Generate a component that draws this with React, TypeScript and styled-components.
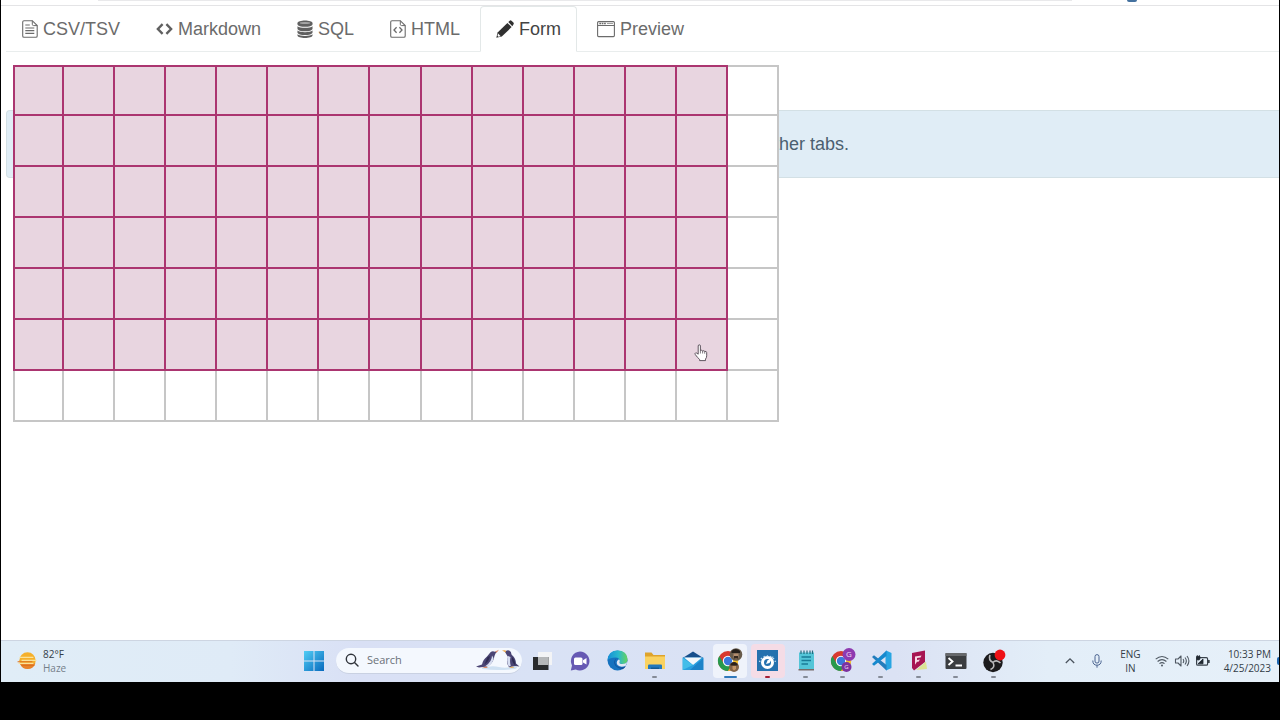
import { useState } from 'react';
import styled, { createGlobalStyle, css } from 'styled-components';

const GlobalStyle = createGlobalStyle`
	* {
		box-sizing: border-box;
	}

	body {
		margin: 0;
		background: #000000;
		font-family: 'Liberation Sans', Arial, sans-serif;
	}

	svg {
		display: block;
		flex-shrink: 0;
	}
`;

const Screen = styled.div`
	display: flex;
	flex-direction: column;
	min-height: 100vh;
	padding: 0 1px 38px;
	overflow: hidden;
`;

const BrowserEdge = styled.div`
	display: flex;
	align-items: flex-start;
	height: 6px;
	padding-left: 97px;
	background: #ffffff;
	border-bottom: 1px solid #e4e4e6;

	.address {
		flex: 0 1 974px;
		height: 1px;
		background: #e9e9eb;
	}

	.extension {
		width: 10px;
		height: 2px;
		margin-left: 55px;
		background: #44719f;
		border-radius: 0 0 2px 2px;
	}
`;

const Page = styled.main`
	flex: 1;
	background: #ffffff;
`;

const Tabs = styled.nav`
	display: flex;
	gap: 4px;
	margin-left: 5px;
	border-bottom: 1px solid #e9eded;
`;

const Tab = styled.a<{ $active?: boolean }>`
	display: flex;
	align-items: center;
	gap: 5px;
	height: 46px;
	margin-bottom: -1px;
	padding: 0 15px;
	border: 1px solid transparent;
	border-radius: 4px 4px 0 0;
	font-size: 18px;
	line-height: 24px;
	color: #6b6b6b;
	text-decoration: none;
	white-space: nowrap;

	${(p) =>
		p.$active &&
		css`
			color: #444444;
			background: #ffffff;
			border-color: #e3e8e8;
			border-bottom-color: #ffffff;
		`}
`;

const Panel = styled.section`
	position: relative;
	padding: 58px 0 0 5px;
`;

const Alert = styled.p`
	margin: 0;
	padding: 21px 16px 21px 757px;
	background: #e0edf6;
	border: 1px solid #d3e0e5;
	border-right: 0;
	border-radius: 4px 0 0 4px;
	font-size: 18px;
	line-height: 24px;
	color: #4b5f70;
`;

const SizePicker = styled.div`
	position: absolute;
	top: 13px;
	left: 12px;
	display: grid;
	grid-template-columns: 51px repeat(14, 1fr);
	width: 766px;
	border-top: 2px solid #c6c6c6;
`;

const Cell = styled.button<{ $on: boolean; $first: boolean; $top: boolean }>`
	position: relative;
	height: ${(p) => (p.$top ? 49 : 51)}px;
	margin: 0;
	padding: 0;
	background: ${(p) => (p.$on ? '#e8d5e0' : '#ffffff')};
	border: solid ${(p) => (p.$on ? '#ab3570' : '#c6c6c6')};
	border-width: 0 2px 2px ${(p) => (p.$first ? 2 : 0)}px;
	border-radius: 0;
	cursor: pointer;

	${(p) =>
		p.$top &&
		p.$on &&
		css`
			height: 51px;
			margin-top: -2px;
			border-top-width: 2px;
		`}

	svg {
		position: absolute;
		top: 24px;
		left: 17px;
	}
`;

const Taskbar = styled.footer`
	display: flex;
	align-items: center;
	height: 42px;
	padding-bottom: 2px;
	border-top: 1px solid #cdd5e2;
	background: linear-gradient(90deg, #e0edf7 0%, #dfebf7 18%, #d9e0f5 28%, #d9e2f5 42%, #dbe2f4 70%, #e3eef8 82%, #e6f0f9 100%);
	font-family: 'Open Sans', 'Noto Sans', sans-serif;
	font-size: 10px;
	line-height: 14px;
	color: #333d47;
`;

const Weather = styled.div`
	display: flex;
	align-items: center;
	gap: 6px;
	width: 296px;
	padding-left: 16px;

	.muted {
		color: #75808a;
	}
`;

const TaskButton = styled.button<{ $tint?: string }>`
	display: flex;
	align-items: center;
	justify-content: center;
	width: 34px;
	height: 34px;
	padding: 0;
	border: 0;
	border-radius: 4px;
	background: ${(p) => p.$tint || 'transparent'};
`;

const SearchBox = styled.label`
	display: flex;
	align-items: center;
	gap: 8px;
	width: 186px;
	height: 26px;
	margin-left: 5px;
	padding: 0 1px 0 9px;
	background: #f4f8fe;
	border-bottom: 1px solid #c9d1e2;
	border-radius: 13px;

	input {
		flex: 1;
		width: 0;
		padding: 0;
		border: 0;
		outline: 0;
		background: transparent;
		font: inherit;
		font-size: 11px;
		color: #333d47;
	}

	input::placeholder {
		color: #6a7078;
		opacity: 1;
	}
`;

const Apps = styled.div`
	display: grid;
	grid-template-columns: repeat(13, 1fr);
	justify-items: center;
	width: 490px;
	margin-left: 1px;
`;

const AppSlot = styled.div<{ $mark?: string; $wide?: boolean }>`
	position: relative;

	&::after {
		content: '';
		position: absolute;
		bottom: 0;
		left: calc(50% - ${(p) => (p.$wide ? 6 : 3)}px);
		width: ${(p) => (p.$wide ? 13 : 5)}px;
		height: 2px;
		border-radius: 1px;
		background: ${(p) => p.$mark || 'transparent'};
	}
`;

const Tray = styled.div`
	display: flex;
	align-items: center;
	margin-left: auto;

	.quick {
		display: flex;
		align-items: center;
		gap: 17px;
	}

	.language {
		margin: 0 14px 0 18px;
		text-align: center;
	}

	.status {
		display: flex;
		gap: 5px;
	}

	.clock {
		margin: 0 6px 0 14px;
		text-align: right;
		white-space: nowrap;
	}

	.badge {
		width: 2px;
		height: 8px;
		border-radius: 2px 0 0 2px;
		background: #1e67b2;
	}
`;

const FileTextIcon = () => (
	<svg width="16" height="18" viewBox="0 0 16 18" fill="none" stroke="#6b6b6b">
		<path d="M2 .7h8.3l4.9 4.9V16q0 1.3-1.3 1.3H2Q.7 17.3.7 16V2Q.7.7 2 .7z" strokeWidth="1.1" />
		<path d="M10.3.7v3.6q0 1.3 1.3 1.3h3.6" />
		<path d="M3.3 5h4.5M3.3 8h9M3.3 10.7h9M3.3 13.4h9" strokeWidth="1.2" />
	</svg>
);

const CodeIcon = () => (
	<svg width="17" height="18" viewBox="0 0 17 18" fill="none" stroke="#606060" strokeWidth="2.4">
		<path d="M6.6 4.2 1.9 9l4.700 4.800M10.400 4.200 15.100 9l-4.700 4.800" />
	</svg>
);

const DatabaseIcon = () => (
	<svg width="16" height="18" viewBox="0 0 17 18" preserveAspectRatio="none" fill="#606060">
		<path d="M.5 3.2C.5-.4 16.5-.4 16.5 3.2v1c0 3.5-16 3.5-16 0z" />
		<path d="M.5 6.2c2.500 2.200 13.500 2.200 16 0v2.500c0 3.400-16 3.400-16 0z" />
		<path d="M.5 10.500c2.500 2.200 13.500 2.200 16 0v2c0 3.400-16 3.400-16 0z" />
		<path d="M.5 14.300c2.500 2.200 13.500 2.200 16 0v.9c0 3.600-16 3.600-16 0z" />
		<ellipse cx="8.500" cy="2.900" rx="5.500" ry="1" fill="#a5a5a5" />
	</svg>
);

const FileCodeIcon = () => (
	<svg width="16" height="18" viewBox="0 0 16 18" fill="none" stroke="#6b6b6b">
		<path d="M2 .7h8.3l4.9 4.9V16q0 1.3-1.3 1.3H2Q.7 17.3.7 16V2Q.7.7 2 .7z" strokeWidth="1.1" />
		<path d="M10.3.7v3.6q0 1.3 1.3 1.3h3.6" />
		<path d="M6.6 7.3 4 10l2.6 2.7M9.4 7.3 12 10l-2.600 2.700" strokeWidth="1.3" />
	</svg>
);

const PencilIcon = () => (
	<svg width="18" height="18" viewBox="0 0 18 18">
		<path d="m.3 17.7 1.3-5.3L11.4 3l4.200 4.100-9.800 9.500z" fill="#303030" />
		<path d="m12.3 2.1 1.400-1.400q.9-.7 1.800.1L17.400 2.600q.8.900 0 1.800L16.300 6.300z" fill="#303030" />
		<path d="m2.100 13.500 2.600 2.700-2.300.5-.9-.9z" fill="#ffffff" />
	</svg>
);

const WindowIcon = () => (
	<svg width="18" height="18" viewBox="0 0 18 18" fill="none" stroke="#6b6b6b">
		<rect x=".6" y="1.6" width="16.8" height="15" rx="1" strokeWidth="1.1" />
		<path d="M.6 5.5h16.8" />
		<path d="M2.3 3.5h6.5" strokeWidth="1.4" strokeDasharray="1.7 .7" />
		<path d="M10 3.5h6" stroke="#a0a0a0" />
	</svg>
);

const HandIcon = () => (
	<svg width="14" height="18" viewBox="0 0 14 18">
		<path
			d="M4.200 10.200V2q0-1.200 1.100-1.200T6.400 2v4.500q1.600-.7 2.200.4 1.500-.6 2.100.5 1.900-.4 2 1.200v3.200q0 1.800-1.200 3.300v1.500H5.600v-1.200Q3.500 13.700 1.300 10.600 .6 9.200 1.600 8.900q1-.3 2.600 1.300z"
			fill="#ffffff"
			stroke="#4f4650"
			strokeWidth=".9"
		/>
		<path d="M6.400 6.500v3M8.600 7v2.500M10.700 7.500v2.200" stroke="#4f4650" strokeWidth=".7" />
	</svg>
);

const HazeIcon = () => (
	<svg width="20" height="20" viewBox="0 0 20 20">
		<circle cx="10.5" cy="9.5" r="8.2" fill="#f5b02c" />
		<path d="M3 12.500h15.300Q16.300 18 10.500 18 5 18 3 12.500z" fill="#e8822b" />
		<path d="M3 6.300h13M5 9.300h14M2 12.300h14" stroke="#fbe29a" strokeWidth="1.2" strokeLinecap="round" />
		<path d="M1 10.800h14M5 14.500h12" stroke="#dc7220" strokeWidth="1.1" strokeLinecap="round" />
	</svg>
);

const StartIcon = () => (
	<svg width="20" height="20" viewBox="0 0 20 20">
		<defs>
			<linearGradient id="start" x1="0" y1="0" x2="1" y2="1">
				<stop offset="0" stopColor="#50cdf5" />
				<stop offset="1" stopColor="#0869bd" />
			</linearGradient>
		</defs>
		<path d="M0 0h9.500v9.500H0zM10.500 0H20v9.500h-9.500zM0 10.500h9.500V20H0zM10.500 10.500H20V20h-9.500z" fill="url(#start)" />
	</svg>
);

const SearchIcon = () => (
	<svg width="14" height="14" viewBox="0 0 14 14" fill="none" stroke="#30343b" strokeWidth="1.4" strokeLinecap="round">
		<circle cx="6" cy="6" r="4.7" />
		<path d="m9.500 9.500 3.500 3.500" />
	</svg>
);

const PenguinsIcon = () => (
	<svg width="46" height="24" viewBox="0 0 46 24">
		<path d="M7 20q10-3 17-1t16-1q4 1.500 0 3-18 2-33 0z" fill="#cfe1f2" />
		<path d="m1 18.500 6-2q1-5 5-8l3.500-4.200q2-1.800 4.500-.5l2.500-.8-2 2.600q-1 2-1.500 4.400-1.500 6-7 8.500L4 19.500z" fill="#4a4574" />
		<path d="M17 7.500q0 6-6.500 10.500l2.500.3q5-3 5.500-8.300z" fill="#d6ddf0" />
		<path d="m12.500 9 2.500-1q-.5 5-5.500 8.500z" fill="#2e2b52" />
		<path d="m20 3.500 4-1.700-2.500 3zM7 20l4-1.500 2 1.500z" fill="#dd8a68" />
		<path d="M30 4q1.500-2.500 4.200-1.600 2.300 1 2.300 4.100 4.500 4 4.500 9l3.500 3-4.500-.5-6 1.200q-3.500-5-1-10.200z" fill="#4a4574" />
		<path d="M33 8q-2 5 .7 10.500l2-.5q-1.200-4.500-.2-9z" fill="#d6ddf0" />
		<path d="M37 9q3.500 3.500 3.300 8.500-3.800-3-3.300-8.500z" fill="#2e2b52" />
		<path d="m27 2.500 3.500-.2.500 2.200zM34 20l3-1.500 2.500 1z" fill="#e9a23c" />
	</svg>
);

const TaskViewIcon = () => (
	<svg width="22" height="20" viewBox="0 0 22 20">
		<path d="M7 1h14v13H7z" fill="#f3f4f6" />
		<path d="M2 6h15.500v13H2z" fill="#292b2d" />
		<path d="M7 6h10.500v8H7z" fill="#b5b7b9" />
	</svg>
);

const ChatIcon = () => (
	<svg width="20" height="20" viewBox="0 0 20 20">
		<path d="M10 .5a9.500 9.500 0 1 1-4.300 18L.8 19.500 2 14.500A9.500 9.500 0 0 1 10 .5z" fill="#6659b3" />
		<rect x="4" y="6.5" width="8.5" height="7.5" rx="1.5" fill="#ffffff" />
		<path d="m13 9.200 3.500-2.200v6.500L13 11.500z" fill="#ffffff" />
	</svg>
);

const EdgeIcon = () => (
	<svg width="21" height="21" viewBox="0 0 21 21">
		<defs>
			<linearGradient id="edge" x1="0" y1=".5" x2="1" y2=".5">
				<stop offset="0" stopColor="#168fd8" />
				<stop offset=".55" stopColor="#29b9cc" />
				<stop offset="1" stopColor="#69d35b" />
			</linearGradient>
		</defs>
		<circle cx="10.5" cy="10.5" r="10" fill="#1672bf" />
		<path d="M.5 10Q1.500.5 10.500.5q9.500 0 10 8.500.2 5-5 5-4 0-3.200-2.500.7-4-3.800-4-5.500 0-8 2.500z" fill="url(#edge)" />
		<path d="M9.300 8.500q-3 4 .5 7.500 4 3 9 0-1 2-3 3.200Q9 18 7.500 14q-.8-4 1.800-5.500z" fill="#124f99" />
		<path d="M11.500 9.500q2 .5 1 2.500-.7 2 3 2 3 0 4.700-2-.4 2.500-1.700 4-5 2-8-1-2-3 1-5.500z" fill="#e2e7f5" />
	</svg>
);

const FolderIcon = () => (
	<svg width="22" height="20" viewBox="0 0 22 20">
		<path d="M1 1.500h6.500l2 2.500H21v5H1z" fill="#dea32c" />
		<path d="M1 5.500h20V18H1z" fill="#fad260" />
		<path d="M4 18v-3.500q0-1 1-1h12q1 0 1 1V18z" fill="#2278bd" />
		<path d="M7 18v-1.500h8V18z" fill="#165991" />
	</svg>
);

const MailIcon = () => (
	<svg width="22" height="20" viewBox="0 0 22 20">
		<path d="M.7 7 11 .6 21.300 7z" fill="#174f8c" />
		<path d="M.7 6.500h20.600V19H.7z" fill="#2a9fdf" />
		<path d="M2 6.500h18L11 14z" fill="#f4f8fb" />
		<path d="M.7 7 11 14 .7 19z" fill="#43bde9" />
		<path d="M21.300 7 8 19h13.300z" fill="#1d83c8" />
	</svg>
);

const ChromeWheel = () => (
	<>
		<circle cx="11" cy="13" r="10" fill="#d8392f" />
		<path d="M2.300 8A10 10 0 0 0 11 23l4.300-7.500L6.700 15.500z" fill="#279a4d" />
		<path d="M11 23a10 10 0 0 0 9.300-14H11l4.300 6.500z" fill="#f5c32c" />
		<circle cx="11" cy="13" r="5.2" fill="#ffffff" />
		<circle cx="11" cy="13" r="4.2" fill="#3b78dc" />
	</>
);

const ChromePhotoIcon = () => (
	<svg width="26" height="26" viewBox="0 0 26 26">
		<ChromeWheel />
		<circle cx="19" cy="6.5" r="6.3" fill="#685b4b" />
		<path d="M14.500 3q4-4 8.500 0v2h-8.500z" fill="#251f1b" />
		<path d="M16.500 5.500h5v4l-2.500 2-2.500-2z" fill="#b28c6d" />
		<path d="M17 8h4v2.500h-4z" fill="#352920" />
		<circle cx="17" cy="19" r="5" fill="#826347" />
		<path d="M13.500 16q3.500-4 7 0v1.500h-7z" fill="#2b211b" />
		<path d="M15.500 18h3.500v3l-2 1.500-1.500-1.500z" fill="#c29568" />
	</svg>
);

const ChromeProfileIcon = () => (
	<svg width="26" height="26" viewBox="0 0 26 26">
		<ChromeWheel />
		<circle cx="19" cy="6.5" r="6.5" fill="#8e3ab0" />
		<circle cx="16.5" cy="19" r="5" fill="#7c329f" />
		<g fill="#f0d8f8" fontFamily="Open Sans, sans-serif" textAnchor="middle">
			<text x="19" y="9" fontSize="8">G</text>
			<text x="16.5" y="21" fontSize="6">G</text>
		</g>
	</svg>
);

const DialIcon = () => (
	<svg width="21" height="21" viewBox="0 0 21 21">
		<path d="M0 0h21v21H0z" fill="#2471ae" />
		<circle cx="10.5" cy="12.5" r="5" fill="none" stroke="#ffffff" strokeWidth="3" />
		<path d="m9 14 1.500-3.500L16.500 6l-4 7z" fill="#ffffff" />
		<path d="M2.500 12a8.300 8.300 0 0 1 16 0" fill="none" stroke="#c0ddf1" strokeWidth="1.4" strokeDasharray="1.3 2" />
	</svg>
);

const NotepadIcon = () => (
	<svg width="18" height="21" viewBox="0 0 18 21">
		<path d="M2 2.500h15V20H2z" fill="#53c5d8" />
		<path d="M1.500 19H17v1.500H1.500z" fill="#766b68" />
		<path d="M4 .5V4M7 .5V4M10 .5V4M13 .5V4M15.500.5V4" stroke="#226b7e" strokeWidth="1.2" />
		<path d="M4.500 7h9.500M4.500 10.500H14M4.500 14H11" stroke="#187b97" strokeWidth="1.3" />
	</svg>
);

const VscodeIcon = () => (
	<svg width="21" height="21" viewBox="0 0 21 21">
		<path d="m15 .5 5.500 2.500v15L15 20.500 14.500 16V5z" fill="#28a5e2" />
		<path d="m1 7 2-1.700L15.500 15v5.500z" fill="#237dbc" />
		<path d="m1 14 2 1.700L15.500 6V.5z" fill="#1689ce" />
	</svg>
);

const RibbonIcon = () => (
	<svg width="18" height="21" viewBox="0 0 18 21">
		<path d="m2 3 13-2.500V12L4 20.500 2 18z" fill="#a71552" />
		<path d="m6 20 10-8.500 1 7.500z" fill="#dce394" />
		<path d="m5 6.500 6.500-1-1 2-3.500.6v1.900l3-.4-1.500 2.200H7l-2 3z" fill="#f7d9e4" />
	</svg>
);

const TerminalIcon = () => (
	<svg width="22" height="18" viewBox="0 0 22 18">
		<rect x=".5" y="1" width="21" height="16" rx="1" fill="#3b3d40" />
		<path d="M.5 1h21v3H.5z" fill="#66686b" />
		<path d="m3.500 6 4 3.500-4 3.500M10.500 13.500H17" fill="none" stroke="#ffffff" strokeWidth="1.9" />
	</svg>
);

const ObsIcon = () => (
	<svg width="24" height="24" viewBox="0 0 24 24">
		<circle cx="11" cy="13.5" r="9.7" fill="#1b1b1d" />
		<g fill="none" stroke="#b8b8ba" strokeWidth="1.6">
			<path d="M8 6q-2 5 3 7.500" />
			<path d="M18.500 14q-4.500-4-7.500-.5" />
			<path d="M8.500 20.500q5-2 2.500-7" />
		</g>
		<circle cx="18" cy="6" r="5.4" fill="#ef1016" />
	</svg>
);

const ChevronUpIcon = () => (
	<svg width="10" height="10" viewBox="0 0 10 10" fill="none" stroke="#4a535d" strokeWidth="1.3">
		<path d="m.8 7 4.200-4.200L9.200 7" />
	</svg>
);

const MicIcon = () => (
	<svg width="10" height="14" viewBox="0 0 10 14" fill="none" stroke="#4a6390">
		<rect x="3" y=".6" width="4" height="8.5" rx="2" />
		<path d="M.8 6.500q0 4.700 4.200 4.700t4.200-4.700M5 11.200v2.500" />
	</svg>
);

const WifiIcon = () => (
	<svg width="14" height="14" viewBox="0 0 14 14" fill="none" stroke="#505963" strokeWidth="1.1">
		<path d="M.7 5.200q6.300-5.400 12.600 0M2.600 7.500q4.400-3.800 8.800 0M4.500 9.700q2.500-2.200 5 0" />
		<circle cx="7" cy="11.4" r="1" fill="#505963" stroke="none" />
	</svg>
);

const SpeakerIcon = () => (
	<svg width="16" height="14" viewBox="0 0 16 14" fill="none" stroke="#505963" strokeWidth="1.1">
		<path d="M1.500 5H4l3-3v10L4 9H1.500z" strokeLinejoin="round" />
		<path d="M9 5q1.500 2 0 4M11 3.500q2.700 3.500 0 7M13 2q3.800 5 0 10" />
	</svg>
);

const BatteryIcon = () => (
	<svg width="15" height="14" viewBox="0 0 15 14">
		<rect x="1.6" y="3.7" width="11" height="7.5" rx="1.3" fill="none" stroke="#39424b" strokeWidth="1.2" />
		<path d="M13 6h1.700v3H13z" fill="#39424b" />
		<path d="M3 9.800 8 5v4.800zM1.500 2.500h3.500v2q0 1.500-1.700 1.500T1.500 4.500zM2.300 1v2M4.300 1v2" fill="#202830" stroke="#202830" strokeWidth=".8" />
	</svg>
);

const TABS = [
	{ label: 'CSV/TSV', href: '#csv', Icon: FileTextIcon },
	{ label: 'Markdown', href: '#markdown', Icon: CodeIcon },
	{ label: 'SQL', href: '#sql', Icon: DatabaseIcon },
	{ label: 'HTML', href: '#html', Icon: FileCodeIcon },
	{ label: 'Form', href: '#form', Icon: PencilIcon },
	{ label: 'Preview', href: '#preview', Icon: WindowIcon },
];

const IDLE = '#858b97';

const APPS = [
	{ name: 'Task view', Icon: TaskViewIcon },
	{ name: 'Chat', Icon: ChatIcon },
	{ name: 'Edge', Icon: EdgeIcon },
	{ name: 'File Explorer', Icon: FolderIcon, mark: IDLE },
	{ name: 'Mail', Icon: MailIcon },
	{ name: 'Chrome', Icon: ChromePhotoIcon, mark: '#2f78bb', wide: true, tint: '#eff3fb' },
	{ name: 'Screen tool', Icon: DialIcon, mark: '#a51e36', tint: '#f5dce6' },
	{ name: 'Notepad', Icon: NotepadIcon, mark: IDLE },
	{ name: 'Chrome profile', Icon: ChromeProfileIcon, mark: IDLE },
	{ name: 'Visual Studio Code', Icon: VscodeIcon, mark: IDLE },
	{ name: 'Editor', Icon: RibbonIcon, mark: IDLE },
	{ name: 'Terminal', Icon: TerminalIcon, mark: IDLE },
	{ name: 'OBS Studio', Icon: ObsIcon, mark: IDLE },
];

const COLS = 15;
const ROWS = 7;

const TableSizePicker = () => {
	const [size, setSize] = useState({ cols: 14, rows: 6 });
	const cells = Array.from({ length: COLS * ROWS }, (_, i) => ({ col: (i % COLS) + 1, row: Math.floor(i / COLS) + 1 }));

	return (
		<SizePicker>
			{cells.map(({ col, row }) => (
				<Cell
					key={`${row}-${col}`}
					type="button"
					aria-label={`${col} by ${row}`}
					$on={col <= size.cols && row <= size.rows}
					$first={col === 1}
					$top={row === 1}
					onMouseEnter={() => setSize({ cols: col, rows: row })}
				>
					{col === size.cols && row === size.rows && <HandIcon />}
				</Cell>
			))}
		</SizePicker>
	);
};

const App = () => (
	<>
		<GlobalStyle />
		<Screen>
			<BrowserEdge>
				<div className="address" />
				<div className="extension" />
			</BrowserEdge>
			<Page>
				<Tabs>
					{TABS.map(({ label, href, Icon }) => (
						<Tab key={label} href={href} $active={label === 'Form'}>
							<Icon />
							{label}
						</Tab>
					))}
				</Tabs>
				<Panel>
					<Alert>other tabs.</Alert>
					<TableSizePicker />
				</Panel>
			</Page>
			<Taskbar>
				<Weather>
					<HazeIcon />
					<div>
						<div>82°F</div>
						<div className="muted">Haze</div>
					</div>
				</Weather>
				<TaskButton type="button" aria-label="Start">
					<StartIcon />
				</TaskButton>
				<SearchBox>
					<SearchIcon />
					<input type="text" placeholder="Search" aria-label="Search" />
					<PenguinsIcon />
				</SearchBox>
				<Apps>
					{APPS.map(({ name, Icon, mark, wide, tint }) => (
						<AppSlot key={name} $mark={mark} $wide={wide}>
							<TaskButton type="button" aria-label={name} $tint={tint}>
								<Icon />
							</TaskButton>
						</AppSlot>
					))}
				</Apps>
				<Tray>
					<div className="quick">
						<ChevronUpIcon />
						<MicIcon />
					</div>
					<div className="language">
						<div>ENG</div>
						<div>IN</div>
					</div>
					<div className="status">
						<WifiIcon />
						<SpeakerIcon />
						<BatteryIcon />
					</div>
					<div className="clock">
						<div>10:33 PM</div>
						<div>4/25/2023</div>
					</div>
					<div className="badge" />
				</Tray>
			</Taskbar>
		</Screen>
	</>
);

export default App;
